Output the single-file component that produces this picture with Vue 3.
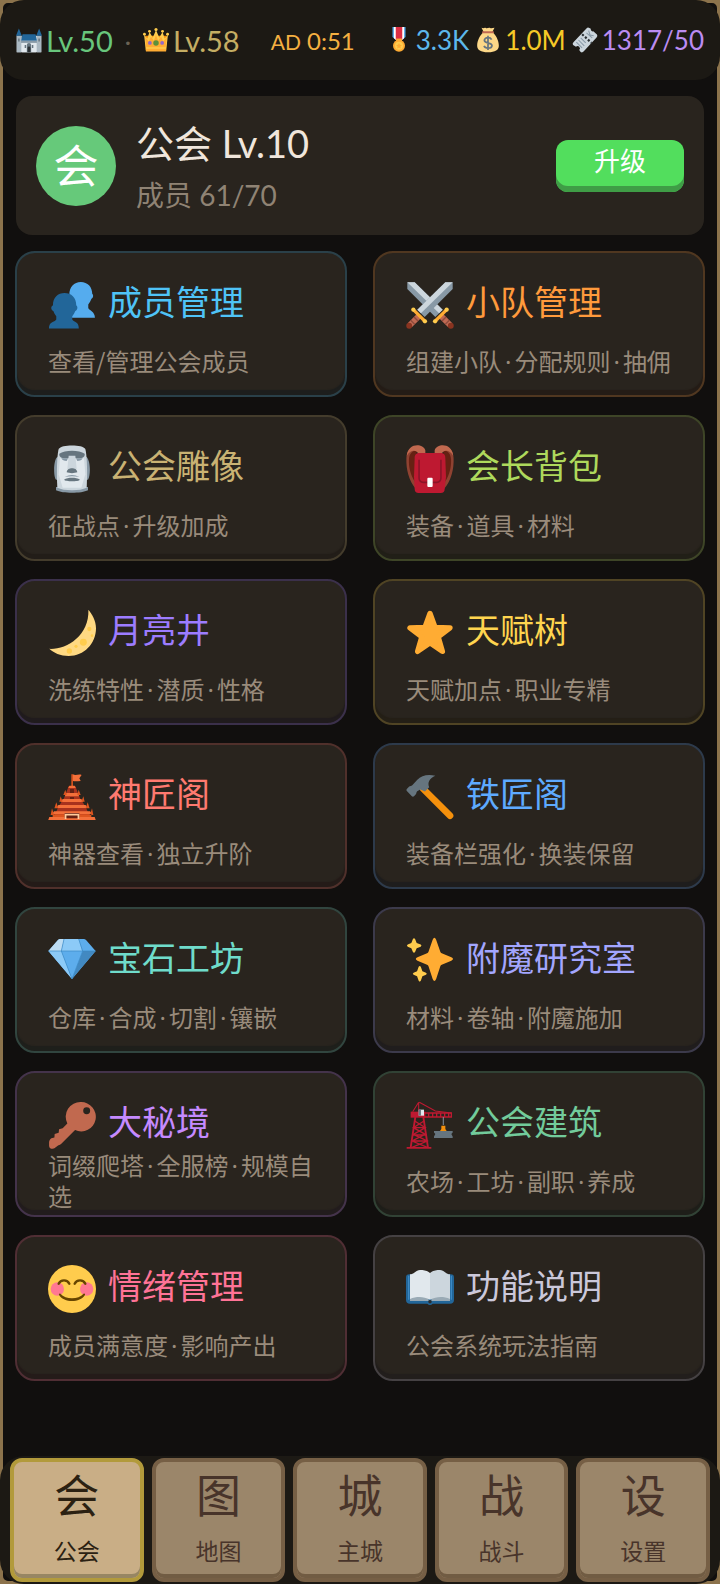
<script setup>
  import { ref } from 'vue';

  const activeTab = ref('guild');

  const resources = [
    { icon: 'medal', value: '3.3K', color: '#5cb8ec' },
    { icon: 'bag', value: '1.0M', color: '#f6c927' },
    { icon: 'ticket', value: '1317/50', color: '#bb8cf2' },
  ];

  const entries = [
    { icon: 'members', title: '成员管理', desc: ['查看/管理公会成员'], color: '#4fc3f7' },
    { icon: 'swords', title: '小队管理', desc: ['组建小队', '分配规则', '抽佣'], color: '#ff9a3c' },
    { icon: 'statue', title: '公会雕像', desc: ['征战点', '升级加成'], color: '#c9b273' },
    { icon: 'backpack', title: '会长背包', desc: ['装备', '道具', '材料'], color: '#aed95c' },
    { icon: 'moon', title: '月亮井', desc: ['洗练特性', '潜质', '性格'], color: '#9c7cff' },
    { icon: 'star', title: '天赋树', desc: ['天赋加点', '职业专精'], color: '#ffd54f' },
    { icon: 'pagoda', title: '神匠阁', desc: ['神器查看', '独立升阶'], color: '#ff7a70' },
    { icon: 'hammer', title: '铁匠阁', desc: ['装备栏强化', '换装保留'], color: '#5eaaff' },
    { icon: 'gem', title: '宝石工坊', desc: ['仓库', '合成', '切割', '镶嵌'], color: '#6fdccb' },
    { icon: 'sparkles', title: '附魔研究室', desc: ['材料', '卷轴', '附魔施加'], color: '#a3a6ff' },
    { icon: 'key', title: '大秘境', desc: ['词缀爬塔', '全服榜', '规模自选'], color: '#c58aff' },
    { icon: 'crane', title: '公会建筑', desc: ['农场', '工坊', '副职', '养成'], color: '#72cb9b' },
    { icon: 'smile', title: '情绪管理', desc: ['成员满意度', '影响产出'], color: '#ff7396' },
    { icon: 'book', title: '功能说明', desc: ['公会系统玩法指南'], color: '#cbc8da' },
  ];

  const tabs = [
    { id: 'guild', glyph: '会', label: '公会' },
    { id: 'map', glyph: '图', label: '地图' },
    { id: 'city', glyph: '城', label: '主城' },
    { id: 'battle', glyph: '战', label: '战斗' },
    { id: 'settings', glyph: '设', label: '设置' },
  ];
</script>

<template>
  <div class="app">
    <svg class="sprite" aria-hidden="true">
      <symbol id="icon-castle" viewBox="0 0 36 36">
        <path fill="#ccd6dd" d="M1 12h7v4h4v-2h3v2h2v-2h3v2h4v-4h11v23H1z" />
        <path fill="#aab8c2" d="M1 12h6v23H1zM29 12h6v23h-6z" />
        <path fill="#e1e8ed" d="M8 19h20v16H8z" />
        <path fill="#226699" d="M4 2l4 10H0zM32 2l4 10h-8zM9 10h18l2 9H7z" />
        <path fill="#8899a6" d="M7 19h22v3H7z" />
        <path fill="#66757f" d="M3 16h2v4H3zM31 16h2v4h-2zM12 25h2v4h-2zM22 25h2v4h-2zM18 22a3 3 0 0 1 3 3v10h-6V25a3 3 0 0 1 3-3z" />
        <path fill="#292f33" d="M18 27a2 2 0 0 1 2 2v6h-4v-6a2 2 0 0 1 2-2z" />
      </symbol>
      <symbol id="icon-crown" viewBox="0 0 36 36">
        <path fill="#f4900c" d="M3 12h30l-1 20H4z" />
        <path fill="#ffcc4d" d="M1.500 11l4.500 5 3-9 4.500 8L18 4l4.500 11L27 7l3 9 4.500-5L32 33H4z" />
        <path fill="#ffac33" d="M3 14l5 6 3-7 4 6 3-8 3 8 4-6 3 7 5-6-1.500 14h-27zM4 30h28v4H4z" />
        <g fill="#ffcc4d">
          <circle cx="2" cy="10" r="2" /><circle cx="9" cy="6" r="2" /><circle cx="18" cy="3.500" r="2.200" />
          <circle cx="27" cy="6" r="2" /><circle cx="34" cy="10" r="2" />
        </g>
        <circle cx="18" cy="22" r="3.800" fill="#5c913b" />
        <circle cx="9.500" cy="22" r="2.600" fill="#9266cc" />
        <circle cx="26.500" cy="22" r="2.600" fill="#9266cc" />
      </symbol>
      <symbol id="icon-medal" viewBox="0 0 36 36">
        <path fill="#55acee" d="M9 0h18v14l-6 5h-6l-6-5z" />
        <path fill="#fff" d="M11 0h14v15.500l-4 3.500h-6l-4-3.500z" />
        <path fill="#dd2e44" d="M13.500 0h9v17l-2 2h-5l-2-2z" />
        <path fill="#ffac33" d="M14 16h8v4h-8z" />
        <circle cx="18" cy="26" r="8.300" fill="#ffac33" />
        <circle cx="18" cy="26" r="5.500" fill="#ffcc4d" />
        <path fill="#ffac33" d="M18 22l1.200 2.700 2.900.3-2.200 2 .7 2.900-2.600-1.500-2.600 1.500.7-2.900-2.200-2 2.900-.3z" />
      </symbol>
      <symbol id="icon-bag" viewBox="0 0 36 36">
        <path fill="#fdd888" d="M12 7L9 1c3 1.500 4-.5 6 .5s4-1 6 0 4-.5 6-.5l-3 6c5 4 9 12 9 19 0 6-5 9-15 9S3 32 3 26C3 19 7 11 12 7z" />
        <path fill="#bf6952" d="M11 6h14a1.300 1.300 0 0 1 0 2.600H11A1.300 1.300 0 0 1 11 6z" />
        <path fill="none" stroke="#67757f" stroke-width="2.400" d="M23 17.500c-1-2-3-2.700-5-2.700-3 0-5 1.200-5 3.700 0 5 10.500 2.500 10.500 7 0 2.500-2.500 3.700-5.500 3.700-2.700 0-4.700-1-5.500-3M18 12v20" />
      </symbol>
      <symbol id="icon-ticket" viewBox="0 0 36 36">
        <path fill="#ccd6dd" d="M20 2q2-2 4-.5l2 1a3 3 0 0 0 3.500 3.500l5 4.500q1.500 2-.5 4L16 34q-2 2-4 .5l-2-2.500a3 3 0 0 0-4.500-4.500L1.500 25Q0 23 2 21z" />
        <path stroke="#292f33" stroke-width="3" stroke-dasharray="3 2.500" d="M14 10l13 12" />
        <path fill="none" stroke="#8899a6" stroke-width="1.400" d="M6 21l8 8M9 18l8 8M12 15l7 7M20 8l8 7M23 5l2 6 5 1" />
      </symbol>

      <symbol id="icon-members" viewBox="0 0 36 36">
        <path fill="#55acee" d="M16 10.500C16 4.500 19.500.8 24.600.8s8.600 3.700 8.600 9c.9.400 1 2.800-.6 3.600-.6 1.600-1.400 3-2.400 4.200v2.700c.8 2 5 2.500 5 7.300H17z" />
        <path fill="#226699" d="M3.700 18.300c0-6 3.700-9.300 8.700-9.300s8.800 3.300 8.800 9.300c1.200.4 1.200 3.400-.7 4.200-.6 1.500-1.300 2.800-2.300 4v2.300c1.400 2.400 4.900 1.200 4.900 6.900H.7c0-5.700 4-4.500 5.500-6.900v-2.300c-1-1.200-1.700-2.500-2.200-4-2-.8-2-3.800-.3-4.200z" />
      </symbol>
      <symbol id="icon-swords" viewBox="0 0 36 36">
        <g id="sword">
          <path fill="#8899a6" d="M1 1h5.500l21 20.500-5.500 5.500L1 6z" />
          <path fill="#ccd6dd" d="M1 1h5.500l21 20.500-2.700 2.700z" />
          <path stroke="#bf6952" stroke-width="4.400" d="M26 26l7 7" />
          <path stroke="#8c4a3c" stroke-width="1" d="M27 30l3-3M29.500 32.500l3-3" />
          <path stroke="#ffac33" stroke-width="2.400" stroke-linecap="round" d="M22 30L30.500 21.500" />
          <circle cx="21.800" cy="30.200" r="1.600" fill="#ffcc4d" />
          <circle cx="30.500" cy="21.500" r="1.600" fill="#ffcc4d" />
          <circle cx="33.600" cy="33.600" r="2.200" fill="#8a3420" />
        </g>
        <use href="#sword" transform="matrix(-1 0 0 1 36 0)" />
      </symbol>
      <symbol id="icon-statue" viewBox="0 0 36 36">
        <path fill="#8899a6" d="M7 9c-3 2-3 15-1 17h24c2-3 2-14-1-17zM6 31.500h24V34c-5 2.500-19 2.500-24 0z" />
        <path fill="#ccd6dd" d="M8 3c2-3.500 18-3.500 20 0 1.500 6 1.500 20 1 29-5 2.500-17 2.500-22 0C6.500 23 6.500 9 8 3z" />
        <path fill="#e1e8ed" d="M9 10h18l1 12-3 10H11L8 22z" />
        <path fill="#66757f" d="M8.500 6.500c4-3 15-3 19 0 .5 2-1.500 3.500-4.500 3.500H13c-3 0-5-1.500-4.500-3.500z" />
        <path fill="#8899a6" d="M10 10h5l-1 2q-3 0-4-2zM21 10h5q-1 2-4 2z" />
        <path fill="#ccd6dd" d="M15.500 8h5l1 10h-7z" />
        <path fill="#66757f" d="M14 20.500c.5-2.500 2-3 4-3s3.500.5 4 3c-2 .8-6 .8-8 0zM12 26c3-1.800 9-1.800 12 0-1 1.500-11 1.500-12 0z" />
        <path fill="#8899a6" d="M12.500 24q5.500-3 11 0-5.500-1.200-11 0z" />
      </symbol>
      <symbol id="icon-backpack" viewBox="0 0 36 36">
        <path fill="#8f4231" d="M7.500 33C2 27 0 18 .3 10 .5 5 2.500 1.500 7 1.500zM28.500 33C34 27 36 18 35.700 10c-.2-5-2.200-8.500-6.700-8.500z" />
        <path fill="#662113" d="M7 28C3 22 2 16 2.200 11c.2-4 2-6.500 5.800-7zM29 28c4-6 5-12 4.800-17-.2-4-2-6.500-5.800-7z" />
        <path fill="#c1694f" d="M.6 8C1.500-1.500 12.500-1.500 14.500 4v4H10C8.500 3 3.500 3 .6 8zM35.400 8C34.500-1.500 23.500-1.500 21.500 4v4H26c1.500-5 6.500-5 9.400 0z" />
        <path fill="#be1931" d="M10 6h16c3 0 3.500 2 3.500 4l.5 14-1 9c0 2-1 3-3 3H9.500c-2 0-3-1-3-3L6 24l.5-14c0-2 .5-4 3.500-4z" />
        <path fill="none" stroke="#8b1428" stroke-width="1.200" d="M9.800 11v14a3 3 0 0 0 3 3h10.400a3 3 0 0 0 3-3V11" />
        <rect x="16" y="24.500" width="4" height="7" rx=".8" fill="#fff" />
      </symbol>
      <symbol id="icon-moon" viewBox="0 0 36 36">
        <path fill="#ffd983" d="M30.300.5C33 4 36 8.500 36 14.500 36 26 27 35.300 15.500 35.300 9.500 35.300 4 33 1 29.900 14 30.500 31 20 30.300.5z" />
        <g fill="#ffcc4d">
          <circle cx="31" cy="15" r="1.600" /><circle cx="26.500" cy="25" r="2.600" />
          <circle cx="16" cy="31.500" r="2" /><circle cx="21" cy="28" r="1.200" /><circle cx="33" cy="20" r="1" />
        </g>
      </symbol>
      <symbol id="icon-star" viewBox="0 0 36 36">
        <path fill="#ffac33" stroke="#ffac33" stroke-width="4" stroke-linejoin="round" d="M18 3.300l3.800 10.500 11.200.3-8.900 6.800L27.300 31.800 18 25.300l-9.300 6.500 3.200-10.900L3 14.100l11.200-.3z" />
      </symbol>
      <symbol id="icon-pagoda" viewBox="0 0 36 36">
        <path fill="#dd551f" d="M17.500 1h1.200v9h-1.200z" />
        <path fill="#f4703a" d="M18.700 1c2 1.500 4-.5 6.500.5L23.500 4l1 2c-2 0-4 .5-5.800 0z" />
        <path fill="#a8321d" d="M15.500 10h5L24 19l4 6 4 9H4l4-9 4-6z" />
        <path fill="#f4703a" d="M16 9.500h4l.8 1.700h-5.600zM13.800 15h8.400l1.200 2.500H12.600zM11 19.500h14l1.500 2.200h-17zM7.800 24h20.400l1.500 2.200H6.300zM4.500 28.700h27l1.500 2H3zM1 33h34l.8 2.300H.2z" />
        <path fill="#dd551f" d="M13 12.500l1 4h-2.500zM23 12.500l-1 4h2.500zM9.500 17.500l1.500 4H8.500zM26.500 17.500l-1.500 4h2.500zM6.200 22l1.600 4.500h-3zM29.800 22l-1.600 4.500h3zM3 26.500l1.500 5H2zM33 26.500l-1.500 5H34zM3.500 31h29v2h-29z" />
        <path fill="#662113" d="M16.500 12h3v3h-3zM16.500 18h3v1.500h-3zM12.500 30h11v4h-11z" />
        <path fill="#ffcc9c" d="M13 30.500h10v1.300H13zM12.500 30.500h1.300v4h-1.300zM22.200 30.500h1.300v4h-1.300z" />
      </symbol>
      <symbol id="icon-hammer" viewBox="0 0 36 36">
        <path stroke="#f4900c" stroke-width="5" stroke-linecap="round" d="M13 12l20 20" />
        <path fill="#66757f" d="M22 2C16 .5 11.500 2 8.500 5L4.700 9.200c-.8.800-1.500.5-2.300 1L.6 12c-.4.500-.3 1.200.2 1.700l3.600 3.700c.5.500 1.200.4 1.600 0l1.400-1.500c.6-.7.2-1.600 1-2.300l2.300-1.200 3.500 1.400 3.200-3.200c-1.500-3.500.2-6.800 4.600-8.600z" />
      </symbol>
      <symbol id="icon-gem" viewBox="0 0 36 36">
        <path fill="#5dadec" d="M.3 10.500l7-8q.8-1 2-1h17.400q1.200 0 2 1l7 8L18 31.500z" />
        <path fill="#bdddf4" d="M.3 10.500l7-8q.8-1 2-1H12l-2 9z" />
        <path fill="#8ccaf7" d="M10 10.500l2-9h11l2.500 9zM.3 10.500H10L18 31.500z" />
        <path fill="#4289c1" d="M26 10.500h9.700L18 31.500z" />
        <path fill="#5dadec" d="M10 10.500h16l-8 21z" />
        <path fill="none" stroke="#3b88c3" stroke-width=".5" d="M.3 10.500h35.400M12 1.500l-2 9 8 21 8-21-3-9" />
      </symbol>
      <symbol id="icon-sparkles" viewBox="0 0 36 36">
        <path fill="#ffac33" d="M20 2q1.300-3 2.600 0l3.200 9.200q.3.800 1 1l7.200 3q2.500 1.300 0 2.600l-7.200 3q-.7.200-1 1l-3.200 9.700q-1.300 3-2.600 0l-3.200-9.700q-.3-.8-1-1l-7.200-3q-2.500-1.300 0-2.600l7.200-3q.7-.2 1-1z" />
        <path fill="#ffcc4d" d="M5.200 1.500q.8-1.200 1.600 0l1.200 3 3 1.200q1.200.8 0 1.600l-3 1.200-1.200 2.700q-.8 1.200-1.600 0L4 8.500 1.300 7.300q-1.200-.8 0-1.600L4 4.500zM9.500 22.300q.8-1.200 1.600 0l1.200 3.400 2.700 1.100q1.200.8 0 1.600l-2.700 1.100-1.200 3.400q-.8 1.200-1.600 0l-1.200-3.400-2.600-1.100q-1.200-.8 0-1.600l2.600-1.100z" />
      </symbol>
      <symbol id="icon-key" viewBox="0 0 36 36">
        <path fill="#c1694f" fill-rule="evenodd" d="M24.700.8a11 11 0 1 1-4.400 21L10 32c-1 1-2 1-2.700 1.500l-2.500 2c-1.200.8-4 .3-4-2V31c0-1 .8-2.500 1.700-3l2.300-.7.2-2.600 3-.8.3-2.700 2.700-.7 3.500-3.700A11 11 0 0 1 24.700.8zM29 4.700a2.600 2.600 0 1 0 0 5.200 2.600 2.600 0 0 0 0-5.200z" />
      </symbol>
      <symbol id="icon-crane" viewBox="0 0 36 36">
        <g fill="none" stroke="#be1931">
          <path stroke-width="1.400" d="M7 12L3.500 35M13 12l3.500 23M.5 35.200h18.500" />
          <path stroke-width="1" d="M6.500 15l8 5-9 5 10.500 5-12 5M13.500 15l-8 5 9 5L4.500 30l12 5M6 20h8.500M5 25.500h10.500M4.500 30h12" />
          <path stroke-width=".8" d="M9.500 1L5 8M9.500 1v7M10 1l12 6.500L34 9" />
          <path stroke-width="1" d="M13 9h21v3H13M17 9v3M20 9v3M23 9v3M26 9v3M29 9v3M32 9v3" />
        </g>
        <path fill="#be1931" d="M3.500 8h11v4.500h-11z" />
        <path fill="#e1e8ed" d="M9.500 6.500h4V11h-4z" />
        <path fill="#66757f" d="M9.500 6.500h1.700V11H9.500z" />
        <path fill="#8899a6" d="M27.600 12h.7v6h-.7z" />
        <path fill="#f4900c" d="M26.500 18.500h3V21l1 1.500h-5l1-1.500z" />
        <path fill="#66757f" d="M21 22.500h14v1.200l-1 1 1 2v1H21v-1l1-2-1-1z" />
      </symbol>
      <symbol id="icon-smile" viewBox="0 0 36 36">
        <circle cx="18" cy="18" r="18" fill="#ffcc4d" />
        <circle cx="7" cy="18" r="5" fill="#ff7892" />
        <circle cx="29" cy="18" r="5" fill="#ff7892" />
        <path fill="none" stroke="#664500" stroke-width="1.800" stroke-linecap="round" d="M8 14c1.500-3.300 6.500-3.300 8 0M20 14c1.500-3.300 6.500-3.300 8 0" />
        <path fill="#664500" d="M9.300 21.500c4 4.500 13.400 4.500 17.400 0 .8-.4 1.400.3 1 1-3.700 6-15.700 6-19.400 0-.4-.7.200-1.400 1-1z" />
      </symbol>
      <symbol id="icon-book" viewBox="0 0 36 36">
        <path fill="#226699" d="M2.500 7h31q2.500 0 2.500 2.500V26q0 3-3 3H20q-2 2-4 0H3q-3 0-3-3V9.500Q0 7 2.500 7z" />
        <path fill="#3b88c3" d="M1.500 8h1v18h-1zM33.500 8h1v18h-1z" />
        <path fill="#99aab5" d="M3 8l14 1v18H3zM33 8l-14 1v18h14z" />
        <path fill="#e1e8ed" d="M3 25.500V7C6 7 7 4 10.500 3.700c3 0 5.500.5 7.500 2.300v20c-5-2.500-10-2.500-15-.5z" />
        <path fill="#ccd6dd" d="M33 25.500V7c-3 0-4-3-7.500-3.300-3 0-5.500.5-7.500 2.300v20c5-2.500 10-2.500 15-.5z" />
        <circle cx="18" cy="27.500" r="1.300" fill="#292f33" />
      </symbol>
    </svg>

    <header class="topbar">
      <div class="levels">
        <span class="stat castle"><svg class="mini"><use href="#icon-castle" /></svg>Lv.50</span>
        <span class="separator">·</span>
        <span class="stat crown"><svg class="mini"><use href="#icon-crown" /></svg>Lv.58</span>
      </div>
      <div class="timer"><small>AD</small> 0:51</div>
      <div class="resources">
        <span v-for="item in resources" :key="item.icon" class="stat" :style="{ color: item.color }">
          <svg class="mini"><use :href="'#icon-' + item.icon" /></svg>{{ item.value }}
        </span>
      </div>
    </header>

    <main class="content">
      <section class="guild">
        <div class="avatar">会</div>
        <div class="guild-info">
          <h1>公会 Lv.10</h1>
          <p>成员 61/70</p>
        </div>
        <button class="upgrade" type="button">升级</button>
      </section>

      <div class="grid">
        <button
          v-for="entry in entries"
          :key="entry.icon"
          class="card"
          type="button"
          :style="{ '--accent': entry.color }"
        >
          <span class="card-title">
            <svg class="icon"><use :href="'#icon-' + entry.icon" /></svg>
            <span class="card-name">{{ entry.title }}</span>
          </span>
          <span class="card-desc">
            <span><template v-for="(part, i) in entry.desc" :key="part"><span v-if="i" class="dot">·</span>{{ part }}</template></span>
          </span>
        </button>
      </div>
    </main>

    <nav class="tabbar">
      <button
        v-for="tab in tabs"
        :key="tab.id"
        class="tab"
        :class="{ active: tab.id === activeTab }"
        type="button"
        @click="activeTab = tab.id"
      >
        <span class="tab-glyph">{{ tab.glyph }}</span>
        <span class="tab-label">{{ tab.label }}</span>
      </button>
    </nav>
  </div>
</template>

<style>
  body {
    background: #8c734c;
  }
</style>

<style scoped>
  .app {
    box-sizing: border-box;
    min-height: 100vh;
    display: flex;
    flex-direction: column;
    border: 3px solid #8c734c;
    border-radius: 8px;
    background: #110f0e;
    font-family: Lato, "Noto Sans CJK SC", sans-serif;
  }

  .sprite {
    position: absolute;
    width: 0;
    height: 0;
  }

  button {
    font-family: inherit;
    cursor: pointer;
  }

  .topbar {
    display: flex;
    align-items: center;
    justify-content: space-between;
    height: 80px;
    margin: -3px -3px 0;
    padding: 0 16px;
    border-radius: 24px;
    background: #1c1914;
    white-space: nowrap;
  }

  .levels,
  .resources,
  .stat {
    display: flex;
    align-items: center;
  }

  .levels {
    gap: 12px;
    font-size: 29px;
  }

  .resources {
    gap: 6px;
    font-size: 26px;
  }

  .stat {
    gap: 4px;
  }

  .castle {
    color: #68c67c;
  }

  .crown {
    color: #c4ad63;
  }

  .separator {
    color: #6b6355;
    font-size: 24px;
  }

  .mini {
    width: 26px;
    height: 26px;
  }

  .timer {
    color: #f5b041;
    font-size: 24px;
  }

  .timer small {
    font-size: 21px;
  }

  .content {
    padding: 16px 12px 24px;
  }

  .guild {
    display: flex;
    align-items: center;
    box-sizing: border-box;
    min-height: 139px;
    margin: 0 1px 16px;
    padding: 12px 20px;
    border-radius: 16px;
    background: #29241e;
  }

  .avatar {
    display: flex;
    align-items: center;
    justify-content: center;
    box-sizing: border-box;
    width: 80px;
    height: 80px;
    padding-bottom: 4px;
    border-radius: 50%;
    background: #66c97a;
    color: #fff;
    font-size: 45px;
  }

  .guild-info {
    flex: 1;
    margin-left: 20px;
    padding-top: 6px;
  }

  .guild-info h1 {
    margin: 0;
    color: #f0e6dc;
    font-size: 38px;
    font-weight: 400;
    line-height: 52px;
  }

  .guild-info p {
    margin: 0;
    color: #8f8374;
    font-size: 28px;
    line-height: 52px;
  }

  .upgrade {
    width: 128px;
    height: 52px;
    padding: 0 0 12px;
    border: 0;
    border-radius: 12px;
    background: #52de5d;
    box-shadow: inset 0 -6px 0 #3f9d46;
    color: #fff;
    font-size: 26px;
  }

  .grid {
    display: grid;
    grid-template-columns: 1fr 1fr;
    gap: 18px 26px;
  }

  .card {
    display: flex;
    flex-direction: column;
    min-height: 146px;
    padding: 28px 31px 4px;
    border: 2px solid color-mix(in srgb, var(--accent) 22%, #1f1b18);
    border-radius: 20px;
    background: #29241e;
    box-shadow: inset 0 -5px 1px color-mix(in srgb, var(--accent) 4%, #1b1714);
    text-align: left;
  }

  .card-title {
    display: flex;
    align-items: center;
    gap: 12px;
    height: 48px;
    color: var(--accent);
    font-size: 34px;
    line-height: 40px;
    white-space: nowrap;
  }

  .card-name {
    padding-bottom: 6px;
  }

  .icon {
    width: 48px;
    height: 48px;
  }

  .card-desc {
    display: flex;
    align-items: center;
    min-height: 62px;
    color: #998b7b;
    font-family: "Noto Sans CJK SC", sans-serif;
    font-size: 24px;
    line-height: 31px;
  }

  .dot {
    margin: 0 3px;
    font-family: "Noto Sans", sans-serif;
    line-height: 1;
  }

  .tabbar {
    display: flex;
    gap: 8px;
    margin: auto -3px -3px;
    padding: 2px 10px;
    border-radius: 24px;
    background: #1c1914;
  }

  .tab {
    flex: 1;
    display: flex;
    flex-direction: column;
    align-items: center;
    height: 124px;
    padding: 3px 0 0;
    border: 4px solid #765f45;
    border-radius: 12px;
    background: #9b866a;
    box-shadow: inset 0 -4px 0 #715c43;
    color: #48342a;
  }

  .tab.active {
    border-color: #b29a3b;
    background: #c9ae86;
    box-shadow: inset 0 -4px 0 #978663;
    color: #2b2112;
  }

  .tab-glyph {
    font-size: 45px;
    line-height: 62px;
  }

  .tab-label {
    font-size: 23px;
    line-height: 48px;
  }
</style>
